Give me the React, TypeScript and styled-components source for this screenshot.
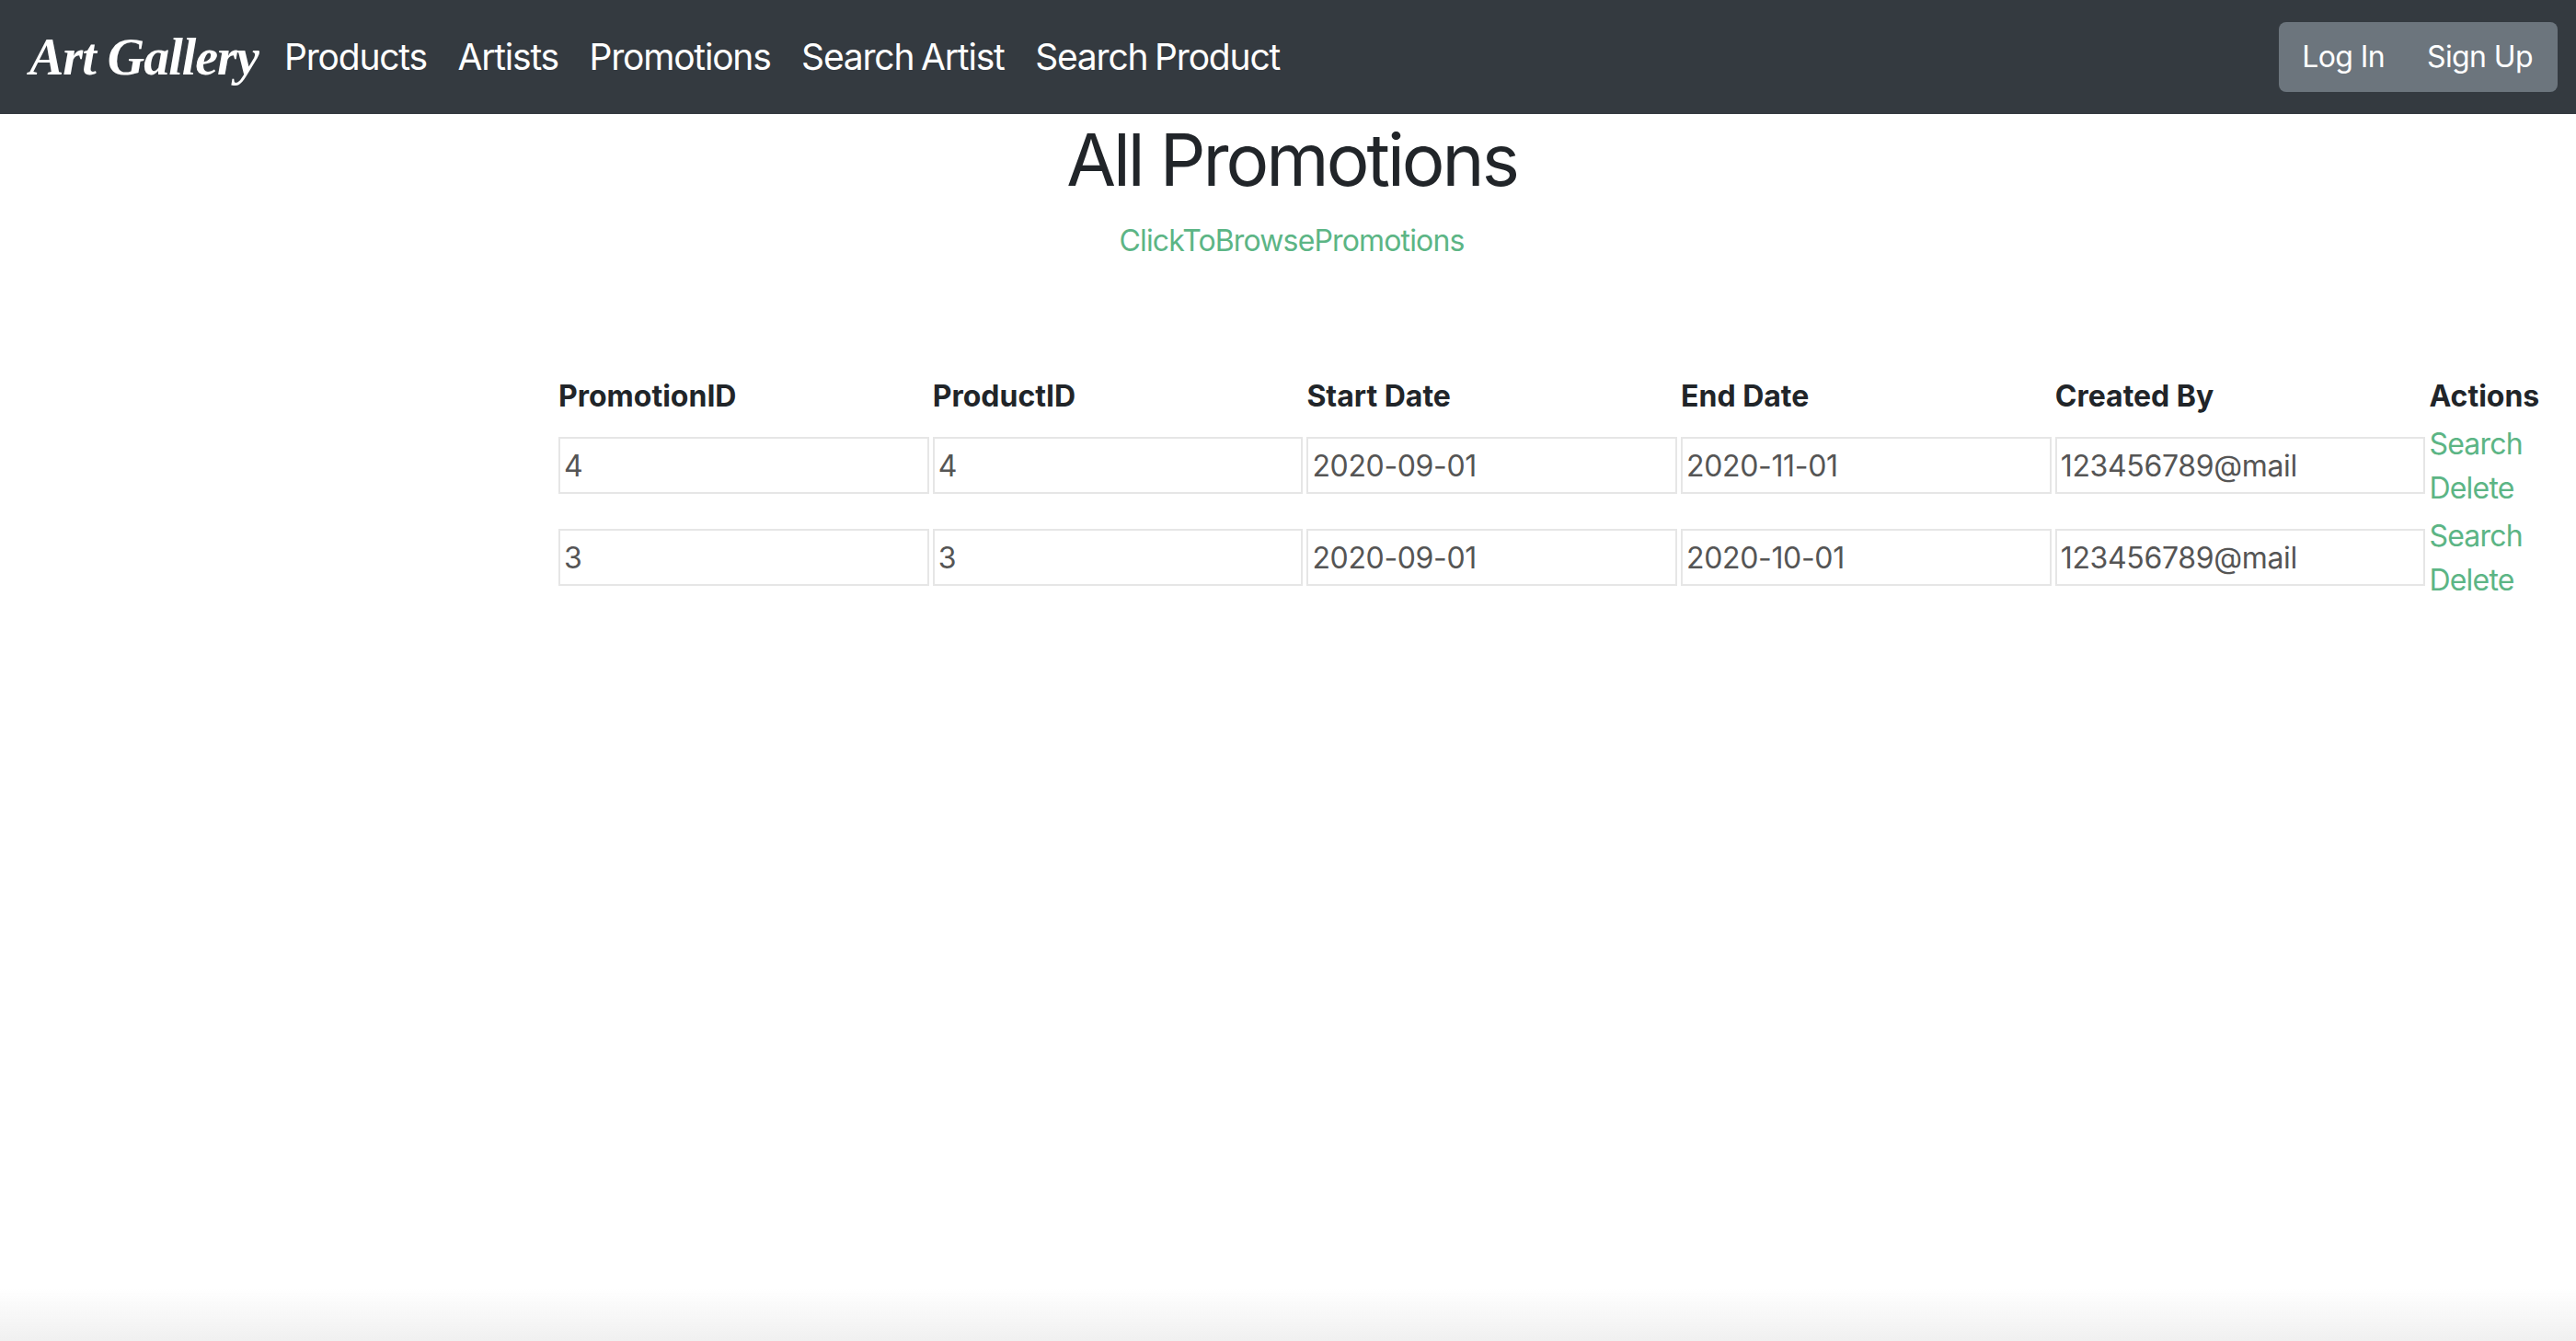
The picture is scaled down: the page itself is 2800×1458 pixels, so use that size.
import { FC } from 'react';
import styled, { createGlobalStyle } from 'styled-components';

const GlobalStyle = createGlobalStyle`
  html, body {
    margin: 0;
    padding: 0;
    background: #fff;
  }
  body {
    font-family: Inter, 'Liberation Sans', sans-serif;
    font-size: 32px;
    line-height: 1.5;
    color: #212529;
  }
`;

const Page = styled.div`
  min-height: 1458px;
`;

const Navbar = styled.nav`
  display: flex;
  align-items: center;
  justify-content: space-between;
  height: 124px;
  padding: 0 20px 0 32px;
  box-sizing: border-box;
  background: #343a40;
`;

const NavLeft = styled.div`
  display: flex;
  align-items: center;
`;

const Brand = styled.a`
  width: 277px;
  font-family: 'Liberation Serif', serif;
  font-style: italic;
  font-weight: 700;
  font-size: 56px;
  line-height: 1;
  letter-spacing: -1px;
  color: #fff;
  white-space: nowrap;
`;

const NavLink = styled.a`
  margin-right: 33.5px;
  font-size: 39px;
  line-height: 60px;
  letter-spacing: -1.2px;
  word-spacing: -2px;
  color: #fff;
`;

const ButtonGroup = styled.div`
  display: flex;
  height: 76px;
  border-radius: 8px;
  background: #6c757d;
`;

const GroupButton = styled.button`
  padding: 0 23px;
  border: 0;
  background: transparent;
  font: inherit;
  letter-spacing: -0.6px;
  color: #fff;
  &:first-child {
    padding-left: 25px;
  }
  &:last-child {
    padding-right: 27px;
  }
`;

const Main = styled.main`
  padding: 2px 0 0 8px;
  text-align: center;
`;

const Title = styled.h1`
  margin: 0 0 16px;
  font-size: 78px;
  font-weight: 400;
  line-height: 96px;
  letter-spacing: -3px;
`;

const BrowseLink = styled.a`
  display: block;
  letter-spacing: -0.85px;
  color: #5cb585;
`;

const TableWrap = styled.div`
  display: flex;
  margin: 117px 0 0 595px;
`;

const Table = styled.table`
  table-layout: fixed;
  border-collapse: separate;
  border-spacing: 4px;
  text-align: left;
  col {
    width: 402.7px;
  }
  col:last-child {
    width: 130px;
  }
`;

const HeadCell = styled.th`
  padding: 0;
  font-weight: 700;
  line-height: 48px;
  letter-spacing: 0;
`;

const Cell = styled.td`
  padding: 0;
`;

const ValueBox = styled.div`
  height: 62px;
  margin-bottom: 2px;
  padding: 0 4px;
  box-sizing: border-box;
  border: 2px solid #e6e6e6;
  line-height: 60px;
  letter-spacing: -0.35px;
  color: #555;
`;

const ActionLink = styled.a`
  display: block;
  line-height: 48px;
  letter-spacing: -0.8px;
  color: #5cb585;
`;

const WindowShade = styled.div`
  position: fixed;
  left: 0;
  right: 0;
  bottom: 0;
  height: 58px;
  background: linear-gradient(to bottom, rgba(240, 240, 240, 0), #f0f0f0);
  pointer-events: none;
`;

interface Promotion {
  promotionId: number;
  productId: number;
  startDate: string;
  endDate: string;
  createdBy: string;
}

const promotions: Promotion[] = [
  { promotionId: 4, productId: 4, startDate: '2020-09-01', endDate: '2020-11-01', createdBy: '123456789@mail' },
  { promotionId: 3, productId: 3, startDate: '2020-09-01', endDate: '2020-10-01', createdBy: '123456789@mail' },
];

const navItems = ['Products', 'Artists', 'Promotions', 'Search Artist', 'Search Product'];
const columns = ['PromotionID', 'ProductID', 'Start Date', 'End Date', 'Created By', 'Actions'];

const PromotionRow: FC<{ promotion: Promotion }> = ({ promotion }) => (
  <tr>
    <Cell><ValueBox>{promotion.promotionId}</ValueBox></Cell>
    <Cell><ValueBox>{promotion.productId}</ValueBox></Cell>
    <Cell><ValueBox>{promotion.startDate}</ValueBox></Cell>
    <Cell><ValueBox>{promotion.endDate}</ValueBox></Cell>
    <Cell><ValueBox>{promotion.createdBy}</ValueBox></Cell>
    <Cell>
      <ActionLink>Search</ActionLink>
      <ActionLink>Delete</ActionLink>
    </Cell>
  </tr>
);

const App: FC = () => (
  <Page>
    <GlobalStyle />
    <Navbar>
      <NavLeft>
        <Brand>Art Gallery</Brand>
        {navItems.map((item) => (
          <NavLink key={item}>{item}</NavLink>
        ))}
      </NavLeft>
      <ButtonGroup>
        <GroupButton>Log In</GroupButton>
        <GroupButton>Sign Up</GroupButton>
      </ButtonGroup>
    </Navbar>
    <Main>
      <Title>All Promotions</Title>
      <BrowseLink>ClickToBrowsePromotions</BrowseLink>
      <TableWrap>
        <Table>
          <colgroup>
            {columns.map((column) => (
              <col key={column} />
            ))}
          </colgroup>
          <thead>
            <tr>
              {columns.map((column) => (
                <HeadCell key={column}>{column}</HeadCell>
              ))}
            </tr>
          </thead>
          <tbody>
            {promotions.map((promotion) => (
              <PromotionRow key={promotion.promotionId} promotion={promotion} />
            ))}
          </tbody>
        </Table>
      </TableWrap>
    </Main>
    <WindowShade />
  </Page>
);

export default App;
